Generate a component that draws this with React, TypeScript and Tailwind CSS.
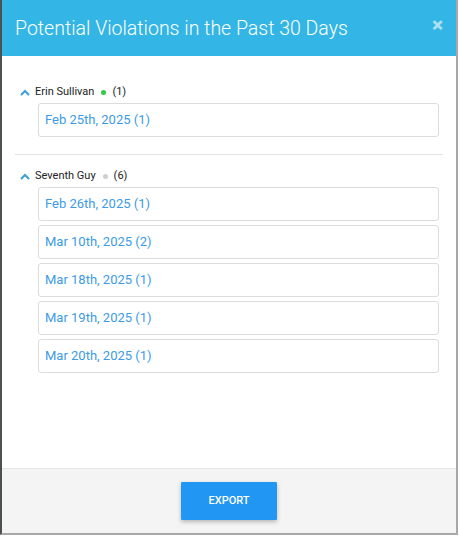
import React from 'react';

// --- Data ---

type Person = {
  name: string;
  online: boolean;
  total: number;
  dates: string[];
};

const people: Person[] = [
  { name: 'Erin Sullivan', online: true, total: 1, dates: ['Feb 25th, 2025 (1)'] },
  {
    name: 'Seventh Guy',
    online: false,
    total: 6,
    dates: [
      'Feb 26th, 2025 (1)',
      'Mar 10th, 2025 (2)',
      'Mar 18th, 2025 (1)',
      'Mar 19th, 2025 (1)',
      'Mar 20th, 2025 (1)',
    ],
  },
];

const ChevronUp = () => (
  <svg width="10" height="7" viewBox="0 0 10 7" className="shrink-0">
    <polyline points="1,6 5,2 9,6" fill="none" stroke="#3a9fd6" strokeWidth="2" />
  </svg>
);

// --- Person group ---

const PersonGroup: React.FC<{ person: Person; first?: boolean }> = ({ person, first }) => (
  <div className={first ? '' : 'pt-[13px]'}>
    <div className="flex items-center h-4 pl-[5px] text-[11px] text-[#222]">
      <ChevronUp />
      <span className="ml-[5px]">{person.name}</span>
      <span
        className={`ml-[7px] w-[5px] h-[5px] rounded-full ${person.online ? 'bg-[#2ecc40]' : 'bg-[#cfcfcf]'}`}
      />
      <span className="ml-[6px]">({person.total})</span>
    </div>
    <div className="flex flex-col gap-[4px] ml-[23px] mr-[4px] mt-[3px]">
      {person.dates.map((d) => (
        <div
          key={d}
          className="h-[34px] flex items-center px-[6px] border border-[#dcdcdc] rounded-[3px] bg-white text-[13px] text-[#3c9be6]"
        >
          {d}
        </div>
      ))}
    </div>
  </div>
);

// --- App ---

export default function App() {
  return (
    <div className="w-[459px] h-[536px] bg-white" style={{ fontFamily: 'Roboto, "Liberation Sans", sans-serif' }}>
      <div className="w-[458px] h-[535px] flex flex-col border-l-2 border-l-[#4b5050] border-r-2 border-r-[#a8a8a8] border-b-2 border-b-[#a8a8a8]">
        <div className="h-[56px] shrink-0 bg-[#33b5e5] flex items-center justify-between pl-[13px] pr-[13px]">
          <h3 className="text-[19.5px] font-light text-white leading-none pt-[1px]">
            Potential Violations in the Past 30 Days
          </h3>
          <span className="text-[21px] font-black text-white/60 leading-none -mt-[6px]">&times;</span>
        </div>

        <div className="flex-1 pt-[28px] px-[13px]">
          <PersonGroup person={people[0]} first />
          <div className="h-px bg-[#e3e3e3] mt-[17px]" />
          <PersonGroup person={people[1]} />
        </div>

        <div className="h-[65px] shrink-0 bg-[#f4f4f4] border-t border-[#e6e6e6] flex items-center justify-center">
          <button className="w-[96px] h-[38px] bg-[#2196f3] text-white text-[11px] font-medium shadow-[0_2px_4px_rgba(0,0,0,0.25)] rounded-[1px]">
            EXPORT
          </button>
        </div>
      </div>
    </div>
  );
}
